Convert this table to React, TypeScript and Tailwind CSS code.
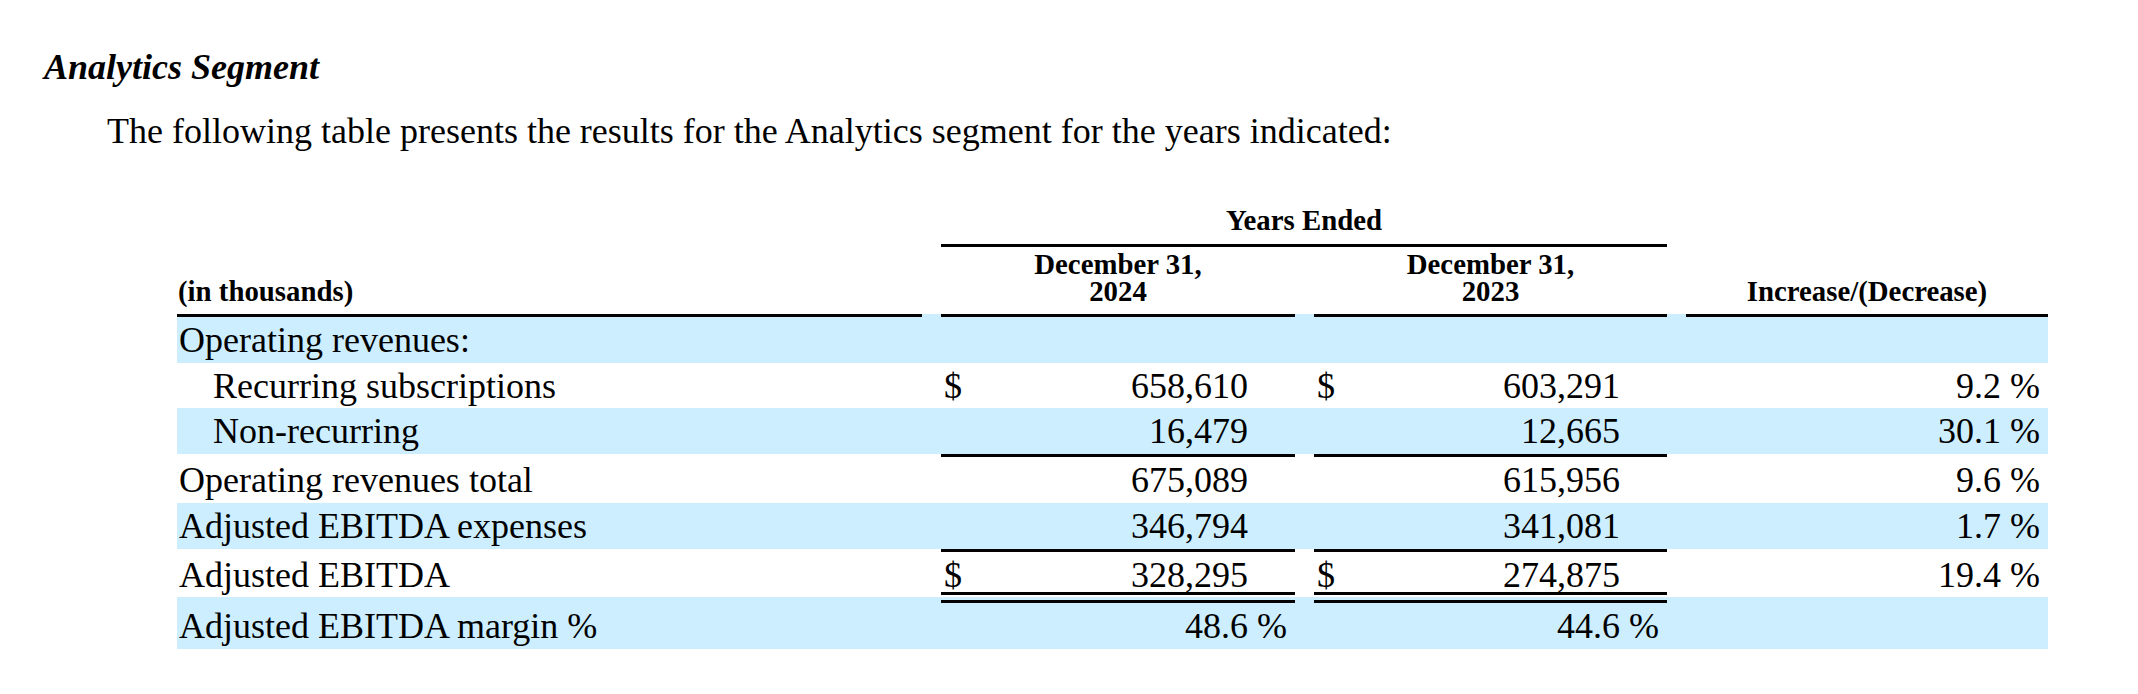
import clsx from "clsx";
import type { ReactNode } from "react";

const BLUE = "bg-[#cceeff]";

function Gap({ className }: { className?: string }) {
  return <div className={clsx("w-[19px] shrink-0", className)} />;
}

function HeadCell({ w, className, children }: { w: string; className?: string; children: ReactNode }) {
  return (
    <div className={clsx("flex shrink-0 flex-col justify-end border-b-[3px] border-black pb-[9px]", w, className)}>
      <div>{children}</div>
    </div>
  );
}

function NumCell({
  w,
  value,
  dollar,
  suffix,
  className,
}: {
  w: string;
  value?: string;
  dollar?: boolean;
  suffix?: boolean;
  className?: string;
}) {
  return (
    <div className={clsx("flex shrink-0", w, className)}>
      <span className="w-[30px] pl-[3px]">{dollar ? "$" : ""}</span>
      <span className="flex-1 text-right">{value}</span>
      <span className="w-[47px] whitespace-pre">{suffix ? " %" : ""}</span>
    </div>
  );
}

function RuleRow() {
  return (
    <div className="flex h-[3px]">
      <div className="w-[745px] shrink-0" />
      <Gap />
      <div className="w-[354px] shrink-0 bg-black" />
      <Gap />
      <div className="w-[353px] shrink-0 bg-black" />
    </div>
  );
}

const rows = [
  { label: "Recurring subscriptions", a: "658,610", b: "603,291", pct: "9.2 %", dollar: true, blue: false, h: "h-[45px]" },
  { label: "Non-recurring", a: "16,479", b: "12,665", pct: "30.1 %", dollar: false, blue: true, h: "h-[46px]" },
];

const totals = [
  { label: "Operating revenues total", a: "675,089", b: "615,956", pct: "9.6 %", blue: false },
  { label: "Adjusted EBITDA expenses", a: "346,794", b: "341,081", pct: "1.7 %", blue: true },
];

export default function App() {
  return (
    <div className="min-h-screen bg-white pt-[47px] font-['Liberation_Serif','Times_New_Roman',serif] text-black">
      <h2 className="pl-[44px] text-[36px] font-bold italic leading-[40px]">Analytics Segment</h2>
      <p className="mt-[24px] pl-[107px] text-[36px] leading-[40px]">
        The following table presents the results for the Analytics segment for the years indicated:
      </p>

      <div className="ml-[177px] mt-[53px] w-[1871px] text-[36px]">
        <div className="flex text-[28.8px] font-bold leading-[32px]">
          <div className="w-[764px] shrink-0" />
          <div className="w-[726px] shrink-0 border-b-[3px] border-black pb-[8px] text-center">Years Ended</div>
        </div>

        <div className="flex h-[70px] text-[28.8px] font-bold leading-[27px]">
          <HeadCell w="w-[745px]" className="pl-[1px]">(in thousands)</HeadCell>
          <Gap className="border-b-[3px] border-[#cceeff]" />
          <HeadCell w="w-[354px]" className="text-center">
            December 31,
            <br />
            2024
          </HeadCell>
          <Gap className="border-b-[3px] border-[#cceeff]" />
          <HeadCell w="w-[353px]" className="text-center">
            December 31,
            <br />
            2023
          </HeadCell>
          <Gap className="border-b-[3px] border-[#cceeff]" />
          <HeadCell w="w-[362px]" className="text-center">Increase/(Decrease)</HeadCell>
        </div>

        <div className={clsx("flex h-[46px] leading-[46px]", BLUE)}>
          <div className="w-[745px] shrink-0 pl-[2px]">Operating revenues:</div>
        </div>

        {rows.map((r) => (
          <div key={r.label} className={clsx("flex leading-[46px]", r.h, r.blue && BLUE)}>
            <div className="w-[745px] shrink-0 pl-[36px]">{r.label}</div>
            <Gap />
            <NumCell w="w-[354px]" dollar={r.dollar} value={r.a} />
            <Gap />
            <NumCell w="w-[353px]" dollar={r.dollar} value={r.b} />
            <Gap />
            <div className="w-[362px] shrink-0 pr-[8px] text-right">{r.pct}</div>
          </div>
        ))}

        <RuleRow />

        {totals.map((r) => (
          <div key={r.label} className={clsx("flex h-[46px] leading-[46px]", r.blue && BLUE)}>
            <div className="w-[745px] shrink-0 pl-[2px]">{r.label}</div>
            <Gap />
            <NumCell w="w-[354px]" value={r.a} />
            <Gap />
            <NumCell w="w-[353px]" value={r.b} />
            <Gap />
            <div className="w-[362px] shrink-0 pr-[8px] text-right">{r.pct}</div>
          </div>
        ))}

        <RuleRow />

        <div className="flex h-[45px] items-start leading-[46px]">
          <div className="w-[745px] shrink-0 pl-[2px]">Adjusted EBITDA</div>
          <Gap />
          <NumCell w="w-[354px]" dollar value="328,295" className="h-[43px] border-b-[3px] border-black" />
          <Gap />
          <NumCell w="w-[353px]" dollar value="274,875" className="h-[43px] border-b-[3px] border-black" />
          <Gap />
          <div className="w-[362px] shrink-0 pr-[8px] text-right">19.4 %</div>
        </div>

        <div className={clsx("flex h-[52px] items-start leading-[46px]", BLUE)}>
          <div className="w-[745px] shrink-0 pl-[2px] pt-[6px]">Adjusted EBITDA margin %</div>
          <Gap />
          <NumCell w="w-[354px]" value="48.6" suffix className="mt-[3px] h-[49px] border-t-[3px] border-black" />
          <Gap />
          <NumCell w="w-[353px]" value="44.6" suffix className="mt-[3px] h-[49px] border-t-[3px] border-black" />
        </div>
      </div>
    </div>
  );
}
